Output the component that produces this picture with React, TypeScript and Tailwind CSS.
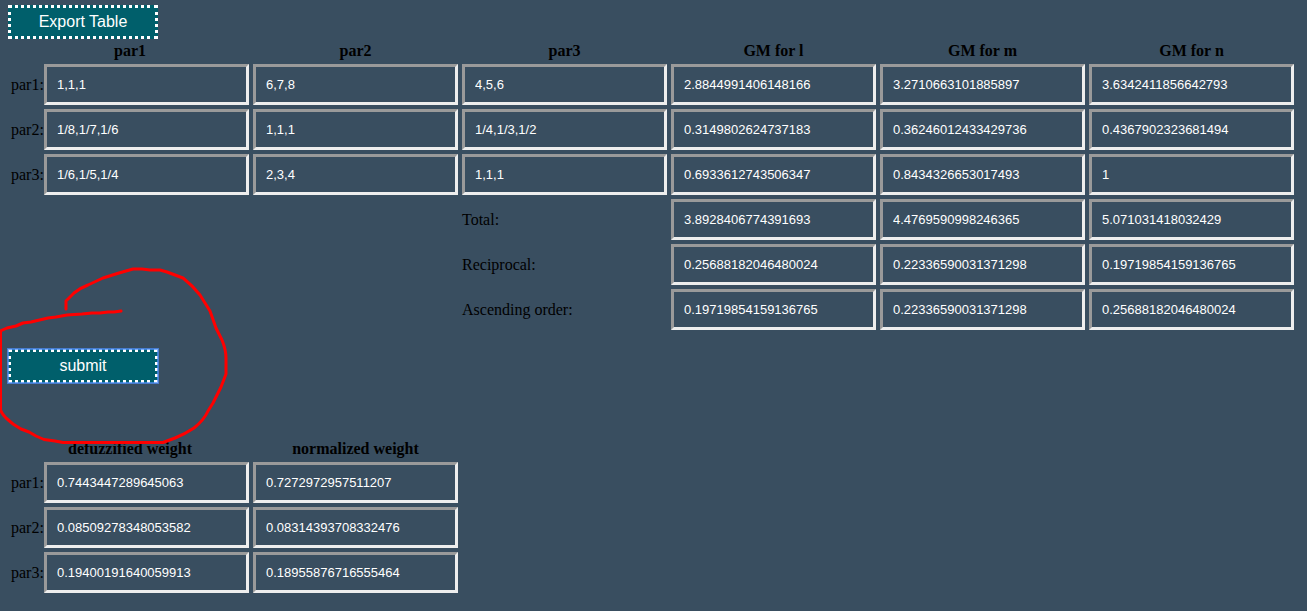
import { useId } from "react";

const comparisonHeaders = ["par1", "par2", "par3", "GM for l", "GM for m", "GM for n"];

const comparisonRows = [
  { label: "par1", values: ["1,1,1", "6,7,8", "4,5,6", "2.8844991406148166", "3.2710663101885897", "3.6342411856642793"] },
  { label: "par2", values: ["1/8,1/7,1/6", "1,1,1", "1/4,1/3,1/2", "0.3149802624737183", "0.36246012433429736", "0.4367902323681494"] },
  { label: "par3", values: ["1/6,1/5,1/4", "2,3,4", "1,1,1", "0.6933612743506347", "0.8434326653017493", "1"] },
];

const summaryRows = [
  { label: "Total:", values: ["3.8928406774391693", "4.4769590998246365", "5.071031418032429"] },
  { label: "Reciprocal:", values: ["0.25688182046480024", "0.22336590031371298", "0.19719854159136765"] },
  { label: "Ascending order:", values: ["0.19719854159136765", "0.22336590031371298", "0.25688182046480024"] },
];

const weightHeaders = ["defuzzified weight", "normalized weight"];

const weightRows = [
  { label: "par1", values: ["0.7443447289645063", "0.7272972957511207"] },
  { label: "par2", values: ["0.08509278348053582", "0.08314393708332476"] },
  { label: "par3", values: ["0.19400191640059913", "0.18955876716555464"] },
];

function Field({ value, name, id }: { value: string; name: string; id?: string }) {
  return (
    <input
      id={id}
      type="text"
      aria-label={id ? undefined : name}
      defaultValue={value}
      className="block h-[41px] w-[205px] border-3 [border-style:inset] border-[#eeeeee] bg-transparent px-[10px] font-['Liberation_Sans',Arial,sans-serif] text-[13px] text-white outline-none"
    />
  );
}

function HeaderRow({ titles }: { titles: string[] }) {
  return (
    <thead>
      <tr>
        {titles.map((title) => (
          <th key={title} scope="col" className="p-px text-center font-bold">
            {title}
          </th>
        ))}
      </tr>
    </thead>
  );
}

function ParameterRow({ label, values, headers }: { label: string; values: string[]; headers: string[] }) {
  const id = useId();
  return (
    <tr>
      {values.map((value, i) => (
        <td key={headers[i]} className="p-px">
          {i === 0 ? (
            <div className="flex items-center">
              <label htmlFor={id} className="w-[33px] shrink-0">
                {label}:
              </label>
              <Field id={id} value={value} name={label} />
            </div>
          ) : (
            <Field value={value} name={`${label} ${headers[i]}`} />
          )}
        </td>
      ))}
    </tr>
  );
}

function ActionButton({ children, active = false }: { children: string; active?: boolean }) {
  return (
    <button
      type="button"
      className={`block h-[34px] w-[150px] border-3 border-dotted border-white bg-[#005f6b] font-['Liberation_Sans',Arial,sans-serif] text-base leading-none text-white ${
        active ? "outline-2 -outline-offset-1 outline-[#4d90fe]/70" : ""
      }`}
    >
      {children}
    </button>
  );
}

export default function App() {
  return (
    <main className="relative min-h-screen overflow-x-auto bg-[#394e60] px-2 pt-[5px] pb-4 font-['Liberation_Serif','Times_New_Roman',serif] text-base leading-[18px] text-black">
      <ActionButton>Export Table</ActionButton>
      <table className="border-separate border-spacing-[2px]">
        <HeaderRow titles={comparisonHeaders} />
        <tbody>
          {comparisonRows.map((row) => (
            <ParameterRow key={row.label} {...row} headers={comparisonHeaders} />
          ))}
          {summaryRows.map((row) => (
            <tr key={row.label}>
              <td />
              <td />
              <th scope="row" className="p-px text-left font-normal">
                {row.label}
              </th>
              {row.values.map((value, i) => (
                <td key={i} className="p-px">
                  <Field value={value} name={`${row.label} ${comparisonHeaders[i + 3]}`} />
                </td>
              ))}
            </tr>
          ))}
        </tbody>
      </table>

      <div className="mt-4 mb-[54px]">
        <ActionButton active>submit</ActionButton>
      </div>

      <table className="border-separate border-spacing-[2px]">
        <HeaderRow titles={weightHeaders} />
        <tbody>
          {weightRows.map((row) => (
            <ParameterRow key={row.label} {...row} headers={weightHeaders} />
          ))}
        </tbody>
      </table>

      {/* Freehand ring around the submit button */}
      <svg
        aria-hidden="true"
        className="pointer-events-none absolute top-[260px] left-0"
        width="240"
        height="200"
        viewBox="0 0 240 200"
        fill="none"
        stroke="#ff0000"
        strokeWidth="3"
        strokeLinecap="round"
        strokeLinejoin="round"
      >
        <path d="M66 49V41L74 33Q80 28 88 25L103 18L119 13L133 9H142L150 10H160L167 12L183 18Q192 25 200 35L210 51L216 68L222 80Q226 90 226 98V114L221 127L213 143L208 151Q204 160 194 168Q185 174 175 178L163 182.500H63L55 181L44 179.500L36 176L29 172L21 169L13 164L6 158Q2 154 0.500 150V71L7 68L16 66L23 63L31 62L48 58L56 57L67 55L82 54L92 53H100L108 52H114L121 51" />
      </svg>
    </main>
  );
}
